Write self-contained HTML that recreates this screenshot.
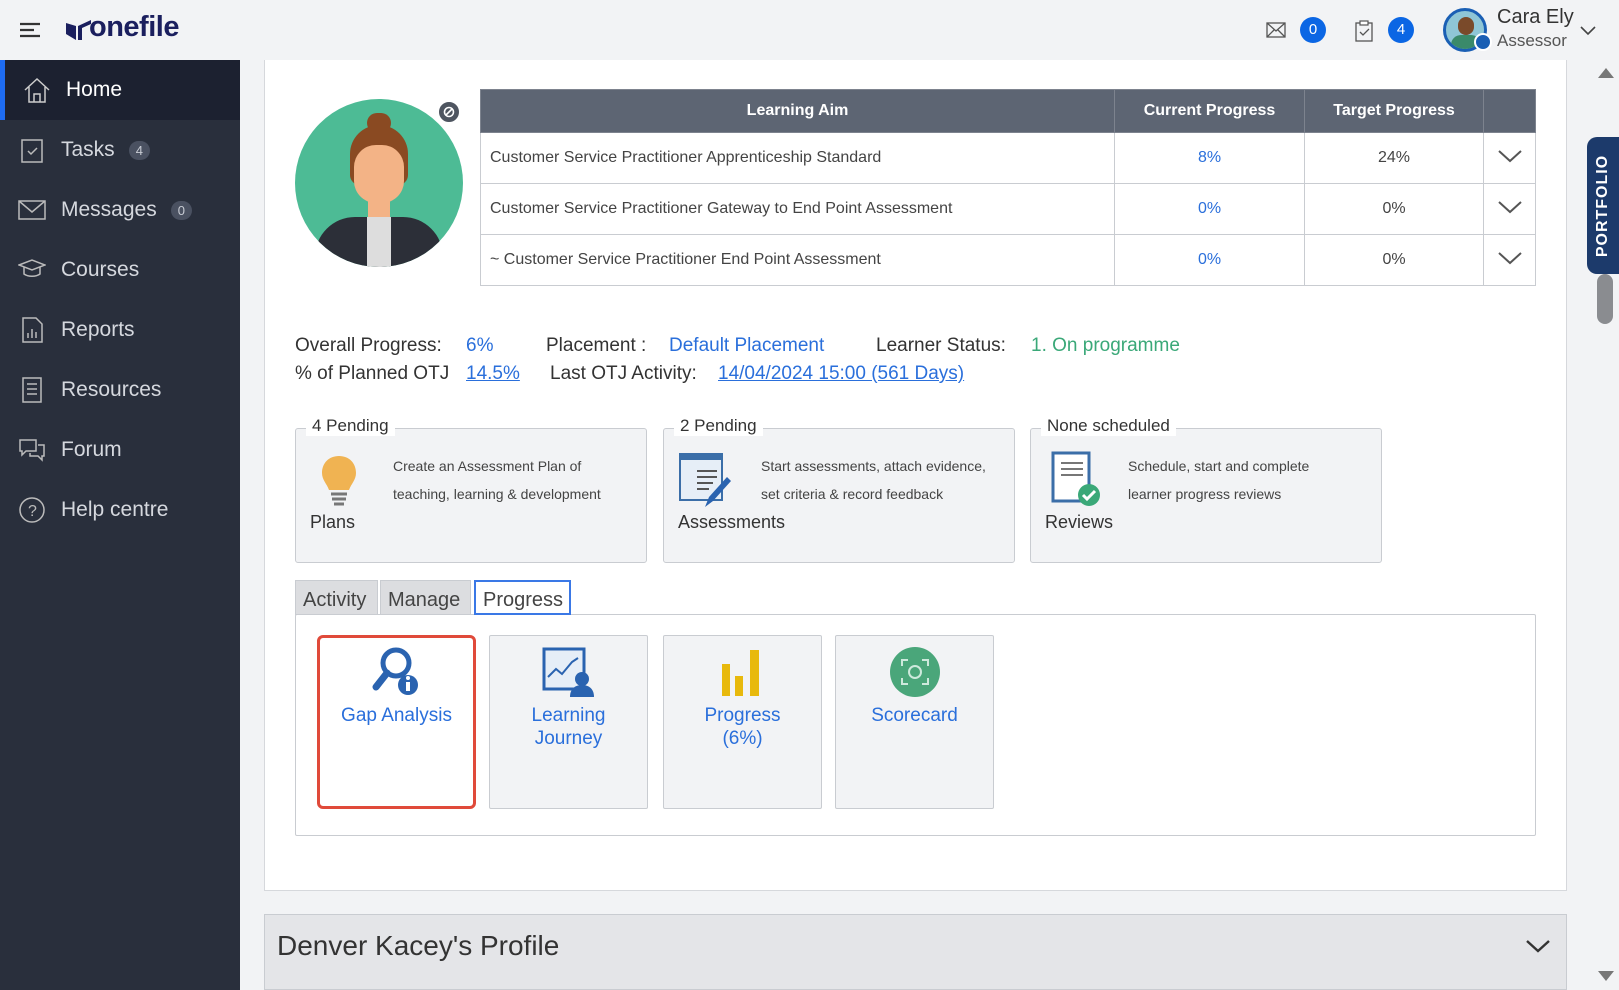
<!DOCTYPE html>
<html><head><meta charset="utf-8"><style>
*{box-sizing:border-box;margin:0;padding:0}
body{width:1619px;height:990px;overflow:hidden;background:#f2f3f5;font-family:"Liberation Sans",sans-serif;color:#333;position:relative}
.abs{position:absolute}
.top{left:0;top:0;width:1619px;height:60px;background:#f2f3f5}
.side{left:0;top:60px;width:240px;height:930px;background:#292f3c}
.nav{position:absolute;left:0;width:240px;height:60px;color:#d5d8de;font-size:21px;display:flex;align-items:center;padding-left:61px}
.nav svg{position:absolute;left:18px;top:16px}
.badge{display:inline-block;background:#4a5161;color:#c8ccd4;font-size:13px;border-radius:10px;padding:2px 7px;margin-left:14px}
.card{left:264px;top:60px;width:1303px;height:831px;background:#fff;border:1px solid #d6d8dc;border-top:none}
table{border-collapse:collapse;position:absolute;left:480px;top:89px;width:1056px;font-size:16px}
th{background:#5d6573;color:#fff;height:43px;font-size:16px;border:1px solid #7d838e}
td{height:51px;border:1px solid #c9ccd1;color:#444}
.blue{color:#2a6fdb}
.lbl{font-size:19px;color:#333}
.lbl.blue{color:#2a6fdb}
.box{position:absolute;top:428px;height:135px;width:352px;background:#f2f3f5;border:1px solid #c9ccd1;border-radius:3px}
.box .leg{position:absolute;top:-13px;left:10px;background:#fff;padding:0 6px;font-size:17px;color:#333}
.box .d{position:absolute;font-size:14px;line-height:28px;color:#444}
.box .t{position:absolute;top:83px;font-size:18px;color:#333}
.tab{position:absolute;top:580px;height:35px;background:#dcdde0;border:1px solid #c9ccd1;font-size:20px;color:#444;padding:8px 7px 0}
.tile{position:absolute;top:635px;height:174px;width:159px;background:#f2f3f5;border:1px solid #c9ccd1;border-radius:2px;text-align:center;color:#2a6fdb;font-size:19px;line-height:23px}
.tile span{position:absolute;left:0;right:0;top:68px}
</style></head><body>
<div class="abs top"></div>
<svg class="abs" style="left:19px;top:22px" width="22" height="16"><path d="M1 2h20M1 8h14M1 14h20" stroke="#333" stroke-width="2.2"/></svg>
<svg class="abs" style="left:66px;top:20px" width="26" height="20"><path d="M0 3l10 3v14L0 14z M12 6l13-6v4l-9 4v12h-4z" fill="#1b1f5e"/></svg>
<div class="abs" style="left:89px;top:11px;font-size:29px;font-weight:bold;color:#1b1f5e;letter-spacing:-0.5px">onefile</div>
<svg class="abs" style="left:1266px;top:22px" width="20" height="16"><rect x="1" y="1" width="18" height="14" fill="none" stroke="#555" stroke-width="1.3"/><path d="M1 1l9 8 9-8M1 15l7-7M19 15l-7-7" fill="none" stroke="#555" stroke-width="1.3"/></svg>
<div class="abs" style="left:1300px;top:17px;width:26px;height:26px;border-radius:13px;background:#0b66e4;color:#fff;font-size:15px;text-align:center;line-height:26px">0</div>
<svg class="abs" style="left:1355px;top:20px" width="18" height="22"><rect x="1" y="3" width="16" height="18" fill="none" stroke="#555" stroke-width="1.3"/><rect x="5" y="1" width="8" height="4" fill="#fff" stroke="#555" stroke-width="1.2"/><path d="M5 12l3 3 6-6" fill="none" stroke="#555" stroke-width="1.3"/></svg>
<div class="abs" style="left:1388px;top:17px;width:26px;height:26px;border-radius:13px;background:#0b66e4;color:#fff;font-size:15px;text-align:center;line-height:26px">4</div>
<div class="abs" style="left:1443px;top:8px;width:44px;height:44px;border-radius:22px;background:#8fc6d6;border:3px solid #1a5fb4;overflow:hidden"><div style="position:absolute;left:12px;top:6px;width:16px;height:18px;border-radius:8px;background:#7a4a2a"></div><div style="position:absolute;left:5px;top:24px;width:30px;height:20px;border-radius:10px 10px 0 0;background:#3a8a6a"></div></div>
<div class="abs" style="left:1474px;top:33px;width:18px;height:18px;border-radius:9px;background:#1a5fb4;border:2px solid #fff"></div>
<div class="abs" style="left:1497px;top:6px;font-size:20px;color:#333">Cara Ely</div>
<div class="abs" style="left:1497px;top:31px;font-size:17px;color:#555">Assessor</div>
<svg class="abs" style="left:1580px;top:26px" width="16" height="10"><path d="M1 1l7 7 7-7" fill="none" stroke="#444" stroke-width="1.6"/></svg>

<div class="abs side">
<div class="nav" style="top:0;background:#1c2130;color:#fff;border-left:5px solid #1e6cf2"><svg width="28" height="28"><path d="M2 14L14 3l12 11M6 11v15h16V11M11 26v-8h6v8" fill="none" stroke="#ccc" stroke-width="1.5"/></svg>Home</div>
<div class="nav" style="top:60px"><svg width="28" height="28"><rect x="4" y="4" width="20" height="22" fill="none" stroke="#bbb" stroke-width="1.5"/><path d="M10 15l3 3 6-6" fill="none" stroke="#bbb" stroke-width="1.5"/></svg>Tasks<span class="badge">4</span></div>
<div class="nav" style="top:120px"><svg width="28" height="28"><rect x="1" y="5" width="26" height="18" fill="none" stroke="#bbb" stroke-width="1.5"/><path d="M1 5l13 11 13-11" fill="none" stroke="#bbb" stroke-width="1.5"/></svg>Messages<span class="badge">0</span></div>
<div class="nav" style="top:180px"><svg width="28" height="28"><path d="M1 9l13-5 13 5-13 5z M6 11v7c4 3 12 3 16 0v-7" fill="none" stroke="#bbb" stroke-width="1.5"/></svg>Courses</div>
<div class="nav" style="top:240px"><svg width="28" height="28"><path d="M5 2h13l6 6v18H5z" fill="none" stroke="#bbb" stroke-width="1.5"/><path d="M10 22v-5M14 22v-9M18 22v-6" stroke="#bbb" stroke-width="1.5"/></svg>Reports</div>
<div class="nav" style="top:300px"><svg width="28" height="28"><rect x="5" y="2" width="18" height="24" fill="none" stroke="#bbb" stroke-width="1.5"/><path d="M9 8h10M9 13h10M9 18h10" stroke="#bbb" stroke-width="1.5"/></svg>Resources</div>
<div class="nav" style="top:360px"><svg width="28" height="28"><path d="M2 4h16v11H8l-4 4v-4H2z M20 9h6v11h-2v4l-4-4h-8v-3" fill="none" stroke="#bbb" stroke-width="1.5"/></svg>Forum</div>
<div class="nav" style="top:420px"><svg width="28" height="28"><circle cx="14" cy="14" r="12" fill="none" stroke="#bbb" stroke-width="1.5"/><text x="10" y="20" font-size="16" fill="#bbb" font-family="Liberation Sans">?</text></svg>Help centre</div>
</div>

<div class="abs card"></div>
<div class="abs" style="left:295px;top:99px;width:168px;height:168px;border-radius:84px;background:#4dbb95;overflow:hidden">
<div style="position:absolute;left:72px;top:14px;width:24px;height:20px;border-radius:12px;background:#8a4a22"></div>
<div style="position:absolute;left:55px;top:26px;width:58px;height:60px;border-radius:29px 29px 10px 10px;background:#8a4a22"></div>
<div style="position:absolute;left:59px;top:46px;width:50px;height:58px;border-radius:22px;background:#f3b386"></div>
<div style="position:absolute;left:73px;top:95px;width:22px;height:30px;background:#f3b386"></div>
<div style="position:absolute;left:20px;top:118px;width:128px;height:70px;border-radius:40px 40px 0 0;background:#2c2f38"></div>
<div style="position:absolute;left:72px;top:118px;width:24px;height:50px;background:#ddd"></div>
</div>
<div class="abs" style="left:437px;top:100px;width:24px;height:24px;border-radius:12px;background:#4e5560;border:2px solid #fff"></div>
<svg class="abs" style="left:443px;top:106px" width="12" height="12"><circle cx="6" cy="6" r="4.5" fill="none" stroke="#fff" stroke-width="1.6"/><path d="M3 9l6-6" stroke="#fff" stroke-width="1.6"/></svg>

<table>
<tr><th style="width:634px">Learning Aim</th><th style="width:190px">Current Progress</th><th style="width:179px">Target Progress</th><th></th></tr>
<tr><td style="padding-left:9px">Customer Service Practitioner Apprenticeship Standard</td><td class="blue" style="text-align:center">8%</td><td style="text-align:center">24%</td><td style="text-align:center"><svg width="24" height="14"><path d="M1 2l11 10 11-10" fill="none" stroke="#555" stroke-width="2"/></svg></td></tr>
<tr><td style="padding-left:9px">Customer Service Practitioner Gateway to End Point Assessment</td><td class="blue" style="text-align:center">0%</td><td style="text-align:center">0%</td><td style="text-align:center"><svg width="24" height="14"><path d="M1 2l11 10 11-10" fill="none" stroke="#555" stroke-width="2"/></svg></td></tr>
<tr><td style="padding-left:9px">~ Customer Service Practitioner End Point Assessment</td><td class="blue" style="text-align:center">0%</td><td style="text-align:center">0%</td><td style="text-align:center"><svg width="24" height="14"><path d="M1 2l11 10 11-10" fill="none" stroke="#555" stroke-width="2"/></svg></td></tr>
</table>

<div class="abs lbl" style="left:295px;top:335px">Overall Progress:</div>
<div class="abs lbl blue" style="left:466px;top:335px">6%</div>
<div class="abs lbl" style="left:546px;top:335px">Placement :</div>
<div class="abs lbl blue" style="left:669px;top:335px">Default Placement</div>
<div class="abs lbl" style="left:876px;top:335px">Learner Status:</div>
<div class="abs lbl" style="left:1031px;top:335px;color:#3aa878">1. On programme</div>
<div class="abs lbl" style="left:295px;top:363px">% of Planned OTJ</div>
<div class="abs lbl blue" style="left:466px;top:363px;text-decoration:underline">14.5%</div>
<div class="abs lbl" style="left:550px;top:363px">Last OTJ Activity:</div>
<div class="abs lbl blue" style="left:718px;top:363px;text-decoration:underline">14/04/2024 15:00 (561 Days)</div>

<div class="box" style="left:295px"><div class="leg">4 Pending</div>
<svg style="position:absolute;left:24px;top:25px" width="38" height="56"><path d="M19 2c10 0 17 7 17 17 0 7-5 11-7 17H9C7 30 2 26 2 19 2 9 9 2 19 2z" fill="#f0b352"/><path d="M11 40h16M12 45h14M14 50h10" stroke="#777" stroke-width="3"/></svg>
<div class="d" style="left:97px;top:23px">Create an Assessment Plan of<br>teaching, learning &amp; development</div>
<div class="t" style="left:14px">Plans</div></div>
<div class="box" style="left:663px"><div class="leg">2 Pending</div>
<svg style="position:absolute;left:15px;top:24px" width="60" height="56"><rect x="1" y="1" width="42" height="46" fill="#e6eef7" stroke="#3b6ea8" stroke-width="2"/><rect x="1" y="1" width="42" height="6" fill="#3b6ea8"/><path d="M18 18h20M18 24h20M18 30h16M18 36h12" stroke="#555" stroke-width="2"/><path d="M26 54l4-10 18-20 4 4-18 20z" fill="#2a63b0"/></svg>
<div class="d" style="left:97px;top:23px">Start assessments, attach evidence,<br>set criteria &amp; record feedback</div>
<div class="t" style="left:14px">Assessments</div></div>
<div class="box" style="left:1030px"><div class="leg">None scheduled</div>
<svg style="position:absolute;left:18px;top:22px" width="56" height="56"><rect x="4" y="2" width="36" height="48" fill="#fff" stroke="#3b6ea8" stroke-width="3"/><path d="M12 12h22M12 18h22M12 24h22" stroke="#777" stroke-width="2"/><circle cx="40" cy="44" r="11" fill="#3aa878"/><path d="M34 44l4 4 8-8" fill="none" stroke="#fff" stroke-width="3"/></svg>
<div class="d" style="left:97px;top:23px">Schedule, start and complete<br>learner progress reviews</div>
<div class="t" style="left:14px">Reviews</div></div>

<div class="abs" style="left:295px;top:614px;width:1241px;height:222px;border:1px solid #c9ccd1;border-radius:2px"></div>
<div class="tab" style="left:295px;width:83px">Activity</div>
<div class="tab" style="left:380px;width:91px">Manage</div>
<div class="tab" style="left:474px;width:97px;background:#fff;border:2px solid #3a78e6;padding-top:7px">Progress</div>

<div class="tile" style="left:317px;background:#fff;border:3px solid #e04a3a;border-radius:6px"><svg style="position:absolute;left:52px;top:7px" width="50" height="52"><circle cx="24" cy="18" r="13" fill="none" stroke="#2a63b0" stroke-width="5"/><path d="M15 28L4 42" stroke="#2a63b0" stroke-width="7" stroke-linecap="round"/><circle cx="36" cy="40" r="10" fill="#2a63b0"/><rect x="34" y="37" width="4" height="9" fill="#fff"/><circle cx="36" cy="33" r="2" fill="#fff"/></svg><span style="top:66px">Gap Analysis</span></div>
<div class="tile" style="left:489px"><svg style="position:absolute;left:52px;top:11px" width="54" height="50"><rect x="2" y="2" width="40" height="40" fill="#e6eef7" stroke="#2a63b0" stroke-width="3"/><path d="M6 30l8-8 6 5 10-12 6-4" fill="none" stroke="#2a63b0" stroke-width="2"/><circle cx="40" cy="32" r="7" fill="#2a63b0"/><path d="M28 50c0-9 6-12 12-12s12 3 12 12z" fill="#2a63b0"/></svg><span>Learning<br>Journey</span></div>
<div class="tile" style="left:663px"><svg style="position:absolute;left:57px;top:14px" width="46" height="46"><rect x="1" y="14" width="8" height="32" fill="#e8b90c"/><rect x="14" y="26" width="8" height="20" fill="#e8b90c"/><rect x="29" y="0" width="9" height="46" fill="#e8b90c"/></svg><span>Progress<br>(6%)</span></div>
<div class="tile" style="left:835px"><svg style="position:absolute;left:53px;top:10px" width="52" height="52"><circle cx="26" cy="26" r="25" fill="#4aa67a"/><path d="M13 20v-6h6M33 14h6v6M39 32v6h-6M19 38h-6v-6" fill="none" stroke="#cde9dc" stroke-width="2"/><circle cx="26" cy="26" r="6" fill="none" stroke="#cde9dc" stroke-width="2"/></svg><span>Scorecard</span></div>

<div class="abs" style="left:264px;top:914px;width:1303px;height:76px;background:#e4e5e8;border:1px solid #c9ccd1"></div>
<div class="abs" style="left:277px;top:930px;font-size:28px;color:#333">Denver Kacey's Profile</div>
<svg class="abs" style="left:1526px;top:939px" width="24" height="14"><path d="M1 2l11 10 11-10" fill="none" stroke="#333" stroke-width="2.4"/></svg>

<div class="abs" style="left:1587px;top:137px;width:40px;height:137px;background:#1c3a6b;border-radius:10px 0 0 10px"></div>
<div class="abs" style="left:1587px;top:137px;width:32px;height:137px;display:flex;align-items:center;justify-content:center"><div style="transform:rotate(-90deg);color:#fff;font-weight:bold;font-size:16px;letter-spacing:1px;white-space:nowrap">PORTFOLIO</div></div>
<div class="abs" style="left:1597px;top:274px;width:16px;height:50px;background:#8a8c90;border-radius:8px"></div>
<svg class="abs" style="left:1597px;top:67px" width="18" height="12"><path d="M1 11l8-10 8 10z" fill="#777"/></svg>
<svg class="abs" style="left:1597px;top:970px" width="18" height="12"><path d="M1 1l8 10 8-10z" fill="#777"/></svg>
</body></html>
